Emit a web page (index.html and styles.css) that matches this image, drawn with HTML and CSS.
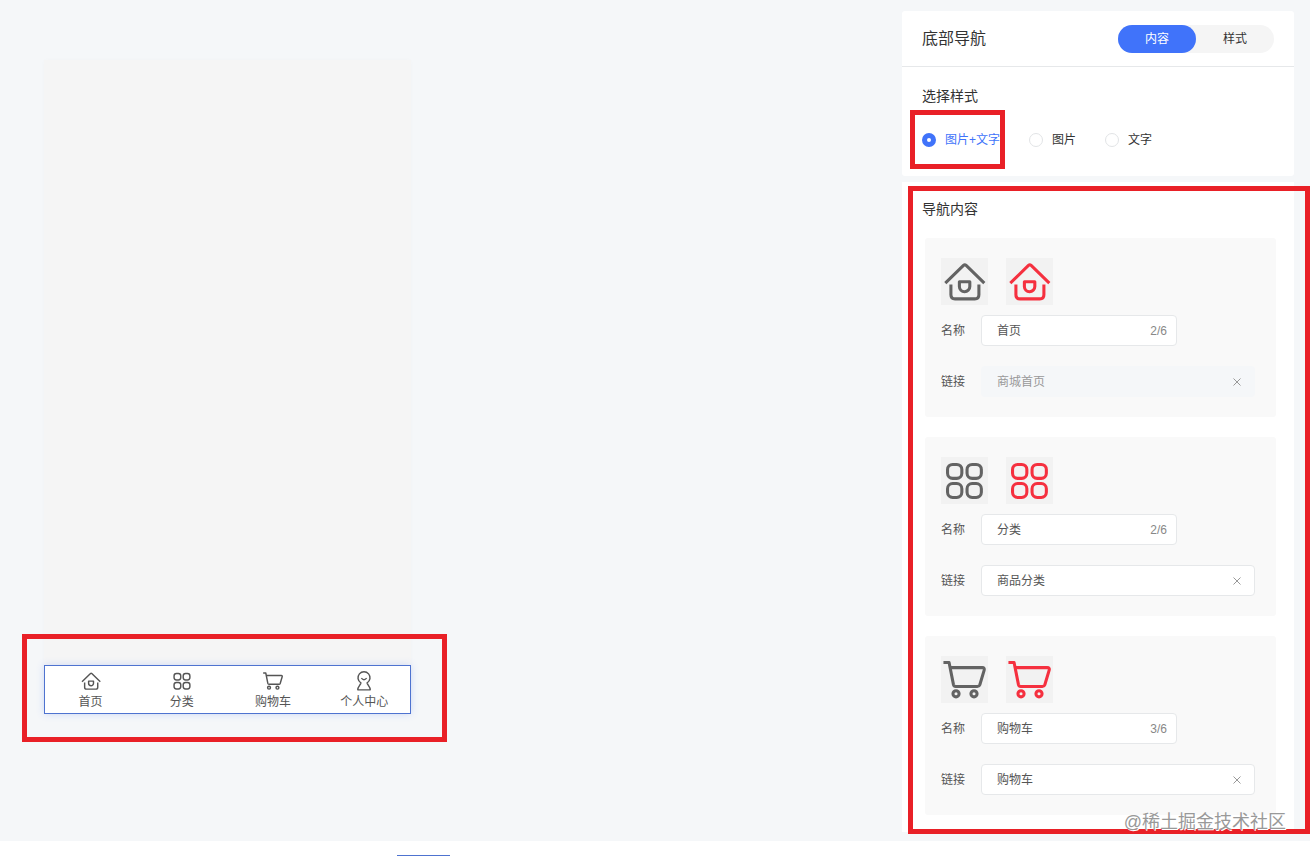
FILE: index.html
```html
<!DOCTYPE html>
<html lang="zh-CN">
<head>
  <meta charset="utf-8">
  <title>底部导航</title>
  <link rel="stylesheet" href="styles.css">
</head>
<body>
  <svg class="sprite" aria-hidden="true">
    <symbol id="icon-home" viewBox="0 0 46 46">
      <path d="M4.200 24.600 22 7.300q1.300-1.200 2.600 0L42.400 24.600"/>
      <path d="M9.700 26V36q0 4 4 4h19.400q4 0 4-4V26"/>
      <path d="M18 23.300h10.200v4.600a5.100 5.100 0 0 1-10.200 0z"/>
    </symbol>
    <symbol id="icon-grid" viewBox="0 0 46 46">
      <rect x="6.400" y="7.300" width="14" height="13.600" rx="5"/>
      <rect x="25.500" y="7.300" width="14" height="13.600" rx="5"/>
      <rect x="6.400" y="26" width="14" height="13.600" rx="5"/>
      <rect x="25.500" y="26" width="14" height="13.600" rx="5"/>
    </symbol>
    <symbol id="icon-cart" viewBox="0 0 46 46">
      <path d="M2.400 6.300h5.500L12.200 28q.4 1.800 2.200 1.800h21.200q1.800 0 2.400-1.700l4.200-14q.8-2.700-1.800-2.700H9"/>
      <circle cx="14.700" cy="37" r="3"/>
      <circle cx="32.300" cy="37" r="3"/>
    </symbol>
    <symbol id="icon-user" viewBox="0 0 46 46">
      <path d="M16.500 27a12.600 12.600 0 1 1 13 0c.5 4.500 6.500 7 6.500 14.500H10c0-7.500 6-10 6.500-14.500z"/>
      <path d="M17.500 17q5.500 6.500 11 0"/>
    </symbol>
    <symbol id="icon-close" viewBox="0 0 16 16">
      <path d="M4.500 4.500l7 7M11.500 4.500l-7 7"/>
    </symbol>
  </svg>

  <main class="editor">
    <div class="phone">
      <div class="phone-screen"></div>
      <nav class="tabbar">
        <a href="#" class="tab"><svg class="tab-icon"><use href="#icon-home"/></svg>首页</a>
        <a href="#" class="tab"><svg class="tab-icon"><use href="#icon-grid"/></svg>分类</a>
        <a href="#" class="tab"><svg class="tab-icon"><use href="#icon-cart"/></svg>购物车</a>
        <a href="#" class="tab"><svg class="tab-icon"><use href="#icon-user"/></svg>个人中心</a>
        <div class="mark mark-tabbar"></div>
      </nav>
    </div>

    <aside class="panel">
      <div class="panel-top">
        <header class="panel-header">
          <h1>底部导航</h1>
          <div class="switch">
            <button type="button" class="active">内容</button>
            <button type="button">样式</button>
          </div>
        </header>
        <section class="panel-section style-section">
          <h2>选择样式</h2>
          <div class="radio-group">
            <label class="radio">
              <input type="radio" name="navStyle" checked>
              <span>图片+文字</span>
              <span class="mark mark-radio"></span>
            </label>
            <label class="radio">
              <input type="radio" name="navStyle">
              <span>图片</span>
            </label>
            <label class="radio">
              <input type="radio" name="navStyle">
              <span>文字</span>
            </label>
          </div>
        </section>
      </div>

      <section class="panel-section content-section">
        <h2>导航内容</h2>
        <div class="cards">
          <div class="card">
            <div class="icons">
              <svg class="icon"><use href="#icon-home"/></svg>
              <svg class="icon icon-active"><use href="#icon-home"/></svg>
            </div>
            <div class="row">
              <label for="name1">名称</label>
              <div class="field field-name">
                <input type="text" id="name1" value="首页" maxlength="6">
                <span class="count">2/6</span>
              </div>
            </div>
            <div class="row">
              <label for="link1">链接</label>
              <div class="field field-link disabled">
                <input type="text" id="link1" value="商城首页" disabled>
                <button type="button" class="clear" aria-label="清除"><svg><use href="#icon-close"/></svg></button>
              </div>
            </div>
          </div>

          <div class="card">
            <div class="icons">
              <svg class="icon"><use href="#icon-grid"/></svg>
              <svg class="icon icon-active"><use href="#icon-grid"/></svg>
            </div>
            <div class="row">
              <label for="name2">名称</label>
              <div class="field field-name">
                <input type="text" id="name2" value="分类" maxlength="6">
                <span class="count">2/6</span>
              </div>
            </div>
            <div class="row">
              <label for="link2">链接</label>
              <div class="field field-link">
                <input type="text" id="link2" value="商品分类">
                <button type="button" class="clear" aria-label="清除"><svg><use href="#icon-close"/></svg></button>
              </div>
            </div>
          </div>

          <div class="card">
            <div class="icons">
              <svg class="icon"><use href="#icon-cart"/></svg>
              <svg class="icon icon-active"><use href="#icon-cart"/></svg>
            </div>
            <div class="row">
              <label for="name3">名称</label>
              <div class="field field-name">
                <input type="text" id="name3" value="购物车" maxlength="6">
                <span class="count">3/6</span>
              </div>
            </div>
            <div class="row">
              <label for="link3">链接</label>
              <div class="field field-link">
                <input type="text" id="link3" value="购物车">
                <button type="button" class="clear" aria-label="清除"><svg><use href="#icon-close"/></svg></button>
              </div>
            </div>
          </div>
        </div>
        <div class="mark mark-content"></div>
        <span class="watermark">@稀土掘金技术社区</span>
      </section>
    </aside>
  </main>

  <footer class="footer">
    <button type="button" class="save" aria-label="保存"></button>
  </footer>
</body>
</html>
```

FILE: styles.css
```css
* {
  box-sizing: border-box;
}

body {
  display: flex;
  flex-direction: column;
  min-height: 100vh;
  margin: 0;
  background: #fff;
  color: #333;
  font-family: "Liberation Sans", "Noto Sans CJK SC", sans-serif;
  font-size: 12px;
  line-height: 20px;
}

h1,
h2 {
  margin: 0;
  font-weight: normal;
}

h1 {
  font-size: 16px;
}

h2 {
  font-size: 14px;
}

button,
input {
  font: inherit;
  color: inherit;
}

button {
  padding: 0;
  border: none;
  background: none;
  cursor: pointer;
}

svg {
  display: block;
  fill: none;
  stroke: currentColor;
  stroke-width: 3;
  stroke-linejoin: round;
}

.sprite {
  position: absolute;
  width: 0;
  height: 0;
}

.editor {
  flex: 1;
  display: flex;
  justify-content: space-between;
  align-items: flex-start;
  padding: 11px 16px 7px 44px;
  background: #f5f7f9;
}

/* phone preview */
.phone {
  width: 367px;
  margin-top: 49px;
  background: #f5f5f5;
  box-shadow: 0 0 4px rgba(0, 0, 0, 0.02);
}

.phone-screen {
  min-height: 605px;
}

.tabbar {
  position: relative;
  display: flex;
  padding: 4px 0 1px;
  border: 1px solid #4e73d0;
  background: #fff;
  box-shadow: 0 0 8px rgba(64, 115, 250, 0.2);
}

.tab {
  flex: 1;
  display: flex;
  flex-direction: column;
  align-items: center;
  color: #555;
  text-decoration: none;
}

.tab-icon {
  width: 22px;
  height: 22px;
}

/* settings panel */
.panel {
  display: flex;
  flex-direction: column;
  gap: 6px;
  width: 392px;
}

.panel-top,
.content-section {
  background: #fff;
}

.panel-top {
  border-radius: 3px;
}

.panel-header {
  display: flex;
  justify-content: space-between;
  align-items: center;
  height: 56px;
  padding: 0 20px;
  border-bottom: 1px solid #e6e8ea;
}

.switch {
  display: flex;
  border-radius: 14px;
  background: #f5f5f5;
}

.switch button {
  width: 78px;
  height: 28px;
  border-radius: 14px;
}

.switch .active {
  background: #4073fa;
  color: #fff;
}

.panel-section {
  padding: 0 18px 0 20px;
}

.style-section {
  padding-top: 19px;
  padding-bottom: 26px;
}

.radio-group {
  display: flex;
  gap: 29px;
  margin-top: 24px;
}

.radio {
  position: relative;
  display: flex;
  align-items: center;
  gap: 9px;
}

.radio input {
  appearance: none;
  width: 14px;
  height: 14px;
  margin: 0;
  border: 1px solid #e2e4e6;
  border-radius: 50%;
  background: #fff;
}

.radio input:checked {
  border: 5px solid #4073fa;
}

.radio input:checked + span {
  color: #4073fa;
}

.content-section {
  position: relative;
  padding-top: 17px;
  padding-bottom: 17px;
}

.cards {
  display: flex;
  flex-direction: column;
  gap: 20px;
  margin: 19px 0 0 3px;
}

.card {
  padding: 20px 16px;
  border-radius: 3px;
  background: #f9f9f9;
}

.icons {
  display: flex;
  gap: 18px;
  margin-bottom: 10px;
}

.icon {
  width: 47px;
  height: 47px;
  background: #f2f2f2;
  color: #636363;
}

.icon-active {
  color: #f5303f;
}

.row {
  display: flex;
  align-items: center;
}

.row + .row {
  margin-top: 20px;
}

.row label {
  width: 40px;
  color: #555;
}

.field {
  display: flex;
  align-items: center;
  height: 31px;
  padding: 0 9px 0 15px;
  border: 1px solid #e6e8ea;
  border-radius: 4px;
  background: #fff;
  color: #555;
}

.field-name {
  width: 196px;
}

.field-link {
  width: 274px;
}

.field input {
  flex: 1;
  min-width: 0;
  padding: 0;
  border: none;
  outline: none;
  background: none;
}

.field.disabled {
  border-color: #f5f7f9;
  background: #f5f7f9;
  color: #999;
}

.count {
  color: #888;
}

.clear svg {
  width: 16px;
  height: 16px;
  color: #999;
  stroke-width: 1;
}

/* red highlight frames */
.mark {
  position: absolute;
  border: 5px solid #e92027;
  pointer-events: none;
}

.mark-tabbar {
  top: -32px;
  right: -37px;
  bottom: -29px;
  left: -23px;
}

.mark-radio {
  top: -20px;
  right: -5px;
  bottom: -19px;
  left: -12px;
}

.mark-content {
  top: 4px;
  right: -16px;
  bottom: -2px;
  left: 6px;
}

.watermark {
  position: absolute;
  right: 8px;
  bottom: 0;
  color: #999;
  font-size: 18px;
  text-shadow: 1px 1px 0 #fff;
}

.footer {
  height: 15px;
  overflow: hidden;
  padding-top: 14px;
  padding-left: 397px;
}

.save {
  display: block;
  width: 53px;
  height: 32px;
  background: #4e73d0;
}
```
